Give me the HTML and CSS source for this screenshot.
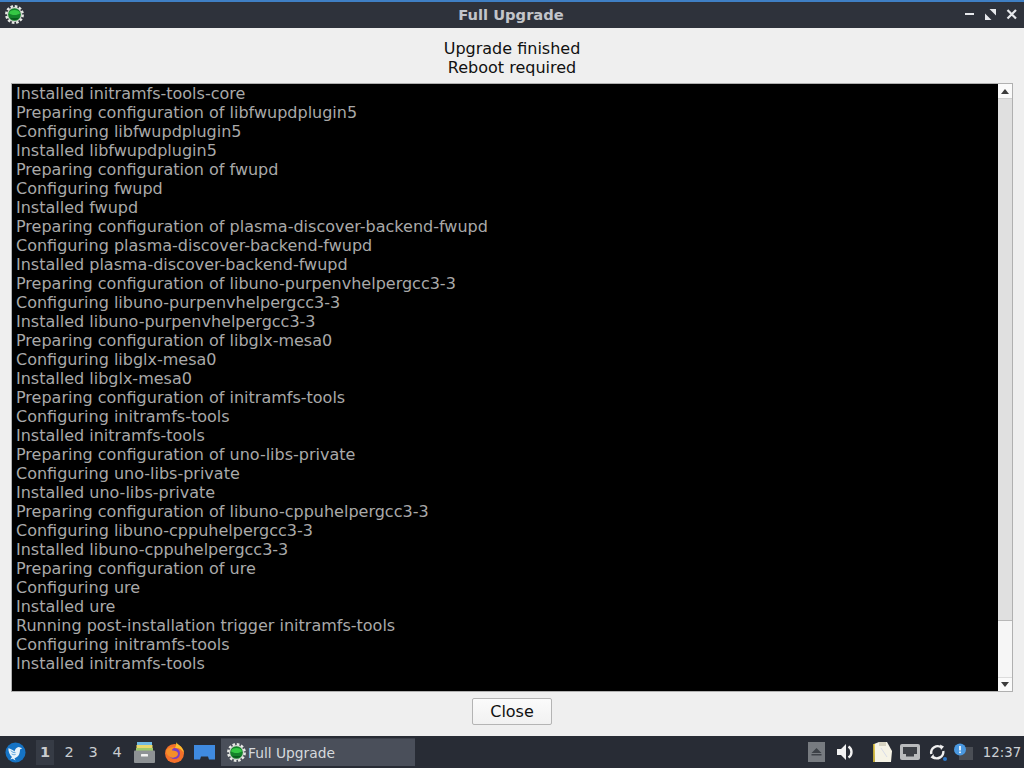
FILE: index.html
```html
<!DOCTYPE html>
<html lang="en">
<head>
<meta charset="utf-8">
<title>Full Upgrade</title>
<link rel="stylesheet" href="styles.css">
</head>
<body>
<svg class="defs" width="0" height="0" aria-hidden="true">
  <defs>
    <g id="gear">
      <circle cx="12" cy="12" r="9.500" fill="#cfd2cc"/>
      <circle cx="12" cy="12" r="10.400" fill="none" stroke="#e8eae6" stroke-width="3" stroke-dasharray="3.300 2.150"/>
      <circle cx="12" cy="12" r="8" fill="#14822a"/>
      <path d="M5 10.500c1-5.400 13-5.400 14 0-3 3-11 3-14 0z" fill="#35c844"/>
      <path d="M6.500 16c3 3.500 8 3.500 11 0-3 1-8 1-11 0z" fill="#07501a"/>
    </g>
  </defs>
</svg>
<div class="window">
  <header class="titlebar">
    <svg class="title-icon" viewBox="0 0 24 24"><use href="#gear"/></svg>
    <div class="title-text">Full Upgrade</div>
    <div class="win-buttons">
      <svg class="win-btn" viewBox="0 0 11 11"><rect x="1" y="4" width="9" height="2" fill="#e6e8ec"/></svg>
      <svg class="win-btn" viewBox="0 0 11 11"><path d="M4.500 0H11v6.500zM0 4.500L6.500 11H0z" fill="#e6e8ec"/></svg>
      <svg class="win-btn" viewBox="0 0 11 11"><path d="M1.500 1l8.500 8.500M10 1L1.500 9.500" stroke="#e6e8ec" stroke-width="2.200"/></svg>
    </div>
  </header>
  <main class="dialog">
    <div class="status">
      <div>Upgrade finished</div>
      <div>Reboot required</div>
    </div>
    <div class="log-frame">
      <div class="log">
        <div>Installed initramfs-tools-core</div>
        <div>Preparing configuration of libfwupdplugin5</div>
        <div>Configuring libfwupdplugin5</div>
        <div>Installed libfwupdplugin5</div>
        <div>Preparing configuration of fwupd</div>
        <div>Configuring fwupd</div>
        <div>Installed fwupd</div>
        <div>Preparing configuration of plasma-discover-backend-fwupd</div>
        <div>Configuring plasma-discover-backend-fwupd</div>
        <div>Installed plasma-discover-backend-fwupd</div>
        <div>Preparing configuration of libuno-purpenvhelpergcc3-3</div>
        <div>Configuring libuno-purpenvhelpergcc3-3</div>
        <div>Installed libuno-purpenvhelpergcc3-3</div>
        <div>Preparing configuration of libglx-mesa0</div>
        <div>Configuring libglx-mesa0</div>
        <div>Installed libglx-mesa0</div>
        <div>Preparing configuration of initramfs-tools</div>
        <div>Configuring initramfs-tools</div>
        <div>Installed initramfs-tools</div>
        <div>Preparing configuration of uno-libs-private</div>
        <div>Configuring uno-libs-private</div>
        <div>Installed uno-libs-private</div>
        <div>Preparing configuration of libuno-cppuhelpergcc3-3</div>
        <div>Configuring libuno-cppuhelpergcc3-3</div>
        <div>Installed libuno-cppuhelpergcc3-3</div>
        <div>Preparing configuration of ure</div>
        <div>Configuring ure</div>
        <div>Installed ure</div>
        <div>Running post-installation trigger initramfs-tools</div>
        <div>Configuring initramfs-tools</div>
        <div>Installed initramfs-tools</div>
      </div>
      <div class="scrollbar">
        <div class="arrow"><svg viewBox="0 0 10 6" class="arrow-icon"><path d="M5 0l5 6H0z"/></svg></div>
        <div class="track"><div class="thumb"></div></div>
        <div class="arrow arrow-down"><svg viewBox="0 0 10 6" class="arrow-icon"><path d="M0 0h10L5 6z"/></svg></div>
      </div>
    </div>
    <div class="actions"><button class="close-btn">Close</button></div>
  </main>
  <footer class="taskbar">
    <svg class="start" viewBox="0 0 22 22">
      <circle cx="11" cy="11" r="10.500" fill="#1673c4"/>
      <path d="M3.500 6.500c2.500.5 4.500 1.500 6.500 3.500 .3-2.500 2-4.500 4.500-4.800l3.500 1.300-2.300 1.300c.2 4.500-2 8.200-5.700 9.200l1 2.500-3-2-2.500.8 1.800-2.600C4.800 13.500 3.500 10 3.500 6.500z" fill="#e8f2fa"/>
      <path d="M6 9c1.500 1.500 3 2.200 5 2.200M7 12.500c1.300.8 2.600 1 4 .6" stroke="#4c9ad8" stroke-width="1" fill="none"/>
    </svg>
    <div class="pager">
      <div class="desk desk-active">1</div>
      <div class="desk">2</div>
      <div class="desk">3</div>
      <div class="desk">4</div>
    </div>
    <svg class="launcher" viewBox="0 0 21 21">
      <rect x="3" y="0" width="15" height="3" fill="#6fb9e2"/>
      <rect x="2.500" y="3" width="16" height="3" fill="#e8d86c"/>
      <rect x="2" y="6" width="17" height="3" fill="#9cc86c"/>
      <rect x="0" y="8.500" width="21" height="12.500" rx="1" fill="#8e9295"/>
      <rect x="7" y="12" width="7" height="2.500" rx=".5" fill="#f2f2f2"/>
    </svg>
    <svg class="launcher" viewBox="0 0 21 21">
      <circle cx="10.500" cy="11.500" r="9.500" fill="#f4702a"/>
      <path d="M12 0c1 2.500 7 4 8 11-2-3.500-5-5.500-9-5 1-2 1.500-4 1-6z" fill="#fbc02d"/>
      <circle cx="10.500" cy="11.500" r="5.500" fill="#7b3fc4"/>
      <path d="M2 9c1-2.500 5-4.500 9-3.500-2 .7-3 1.800-3 3 3 0 6 .8 6 3.300s-3.500 4.700-6.500 3.700S2 12 2 9z" fill="#f58f2a"/>
    </svg>
    <svg class="launcher" viewBox="0 0 21 21">
      <path d="M0 3h21v14.500h-6l-1-3H7l-1 3H0z" fill="#3f8ae0"/>
    </svg>
    <div class="task">
      <svg class="task-icon" viewBox="0 0 24 24"><use href="#gear"/></svg>
      <span class="task-label">Full Upgrade</span>
    </div>
    <div class="tray">
      <svg class="tray-eject" viewBox="0 0 17 20">
        <rect width="17" height="20" fill="#777b80"/>
        <path d="M8.500 6l5 5h-10z M3.500 12h10v1.500h-10z" fill="#3e4248"/>
      </svg>
      <svg class="tray-sound" viewBox="0 0 18 18">
        <path d="M0 6h4l5-5v16l-5-5H0z" fill="#f2f2f2"/>
        <path d="M11.500 3.500c4 2.500 4 8.500 0 11" stroke="#f2f2f2" stroke-width="2.400" fill="none"/>
      </svg>
      <svg class="tray-note" viewBox="0 0 21 22">
        <path d="M2 3l5-2h8l5 9-1 11H3z" fill="#f6f3e6"/>
        <path d="M2 3v18" stroke="#e6c93c" stroke-width="1.600"/>
        <path d="M7 1h7v4H7z" fill="#d8d4c2"/>
        <path d="M9 7l6 9" stroke="#d9dce8" stroke-width="1"/>
      </svg>
      <svg class="tray-net" viewBox="0 0 20 16">
        <rect x="0" y="0" width="20" height="16" rx="2" fill="#b9bbbd"/>
        <path d="M3 3h14v7h-3v2.500H6V10H3z" fill="#3c4046"/>
      </svg>
      <svg class="tray-update" viewBox="0 0 18 18">
        <path d="M2.300 11A6.500 6.500 0 0 1 12.500 4.500M14.300 8A6.500 6.500 0 0 1 4 14" stroke="#f0f0f0" stroke-width="2.400" fill="none"/>
        <path d="M11 1.500l4 2-3 3.500zM5.500 16.500l-4-2 3-3.500z" fill="#f0f0f0"/>
        <circle cx="16" cy="16" r="2" fill="#2d78c8"/>
      </svg>
      <svg class="tray-alert" viewBox="0 0 20 18">
        <rect x="6" y="4" width="14" height="13" fill="#4a4e55"/>
        <circle cx="7" cy="6.500" r="6" fill="#4a98e0"/>
        <rect x="6.200" y="3" width="1.600" height="4.500" fill="#fff"/>
        <rect x="6.200" y="8.500" width="1.600" height="1.600" fill="#fff"/>
      </svg>
      <div class="clock">12:37</div>
    </div>
  </footer>
</div>
</body>
</html>
```
FILE: styles.css
```css
* { box-sizing: border-box; }
html, body { margin: 0; padding: 0; }
body { width: 1024px; height: 768px; overflow: hidden; font-family: "DejaVu Sans", sans-serif; background: #efefef; }
.defs { display: block; height: 0; }
.window { display: flex; flex-direction: column; width: 1024px; height: 768px; }

.titlebar { display: grid; grid-template-columns: 1fr auto 1fr; align-items: center; height: 28px; flex: none; background: #2e323b; border-top: 2px solid #3f7fc4; padding: 0 7px 2px 5px; }
.title-icon { width: 19px; height: 19px; }
.title-text { text-align: center; font-size: 14.700px; font-weight: bold; color: #c2c5ca; }
.win-buttons { display: flex; gap: 10px; justify-content: flex-end; }
.win-btn { width: 11px; height: 11px; }

.dialog { flex: 1; min-height: 0; display: flex; flex-direction: column; background: #efefef; padding: 11px 11px 0 11px; }
.status { text-align: center; font-size: 16px; line-height: 19px; color: #111; height: 44px; flex: none; }
.log-frame { display: flex; height: 609px; flex: none; border: 1px solid #b0b0b0; background: #fff; }
.log { flex: 1; background: #000; color: #a9a9a9; font-size: 16px; line-height: 19px; padding: 0 0 0 4px; white-space: nowrap; overflow: hidden; }
.scrollbar { width: 14px; flex: none; display: flex; flex-direction: column; background: #f4f4f4; }
.arrow { height: 14px; display: flex; align-items: center; justify-content: center; background: #fafafa; flex: none; }
.arrow-down { border-top: 1px solid #dcdcdc; }
.arrow-icon { width: 8px; height: 5px; fill: #3c3c3c; }
.track { flex: 1; background: #f6f6f6; }
.thumb { height: 523px; background: #e0e0e0; border-bottom: 1px solid #b8b8b8; border-top: 1px solid #d0d0d0; }
.actions { display: flex; justify-content: center; padding-top: 6px; }
.close-btn { width: 80px; height: 27px; padding: 0; font: 16px "DejaVu Sans", sans-serif; color: #111; background: linear-gradient(#fbfbfb, #f1f1f1); border: 1px solid #b4b4b4; border-radius: 2px; }

.taskbar { display: flex; align-items: center; height: 32px; flex: none; background: #282c35; padding-left: 5px; }
.start { width: 21px; height: 21px; flex: none; margin-right: 10px; }
.pager { display: flex; height: 25px; margin-right: 5px; }
.desk { width: 24px; display: flex; align-items: center; justify-content: center; font-size: 14.500px; color: #c9ccd0; }
.desk-active { width: 18px; margin-right: 3px; background: #363b45; font-weight: bold; }
.launcher { width: 21px; height: 21px; flex: none; margin-right: 9px; }
.launcher:nth-of-type(4) { margin-right: 6px; }
.task { display: flex; align-items: center; gap: 2px; width: 194px; height: 28px; padding-left: 6px; background: #4a4f5a; border-top: 1px solid #3c404a; flex: none; }
.task-icon { width: 19px; height: 19px; flex: none; }
.task-label { font-size: 13.800px; color: #d6d9dd; }
.tray { flex: 1; display: flex; align-items: center; justify-content: flex-end; padding-right: 1px; height: 100%; }
.tray-eject { width: 17px; height: 20px; margin-right: 12px; }
.tray-sound { width: 18px; height: 18px; margin-right: 17px; }
.tray-note { width: 21px; height: 22px; margin-right: 7px; }
.tray-net { width: 20px; height: 16px; margin-right: 9px; }
.tray-update { width: 18px; height: 18px; margin-right: 6px; }
.tray-alert { width: 20px; height: 18px; margin-right: 8px; }
.clock { font-size: 13.300px; color: #cfd2d6; width: 42px; text-align: center; }
```
